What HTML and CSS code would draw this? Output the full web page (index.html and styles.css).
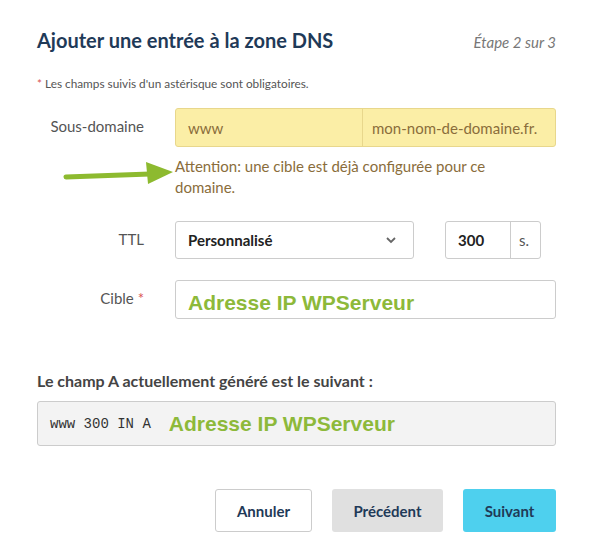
FILE: index.html
```html
<!DOCTYPE html>
<html lang="fr">
<head>
    <meta charset="UTF-8">
    <title>Ajouter une entrée à la zone DNS</title>
    <link rel="stylesheet" href="styles.css">
</head>
<body>
    <div class="dialog">
        <div class="head">
            <h1>Ajouter une entrée à la zone DNS</h1>
            <span class="step">Étape 2 sur 3</span>
        </div>
        <p class="required"><span class="star">*</span> Les champs suivis d'un astérisque sont obligatoires.</p>

        <div class="form">
            <label class="label">Sous-domaine</label>
            <div class="group warn">
                <span class="cell sub">www</span>
                <span class="cell zone">mon-nom-de-domaine.fr.</span>
            </div>

            <div class="arrow-cell">
                <svg class="arrow" width="120" height="26" viewBox="0 0 120 26">
                    <line x1="4" y1="17" x2="88" y2="14" stroke="#8dba2f" stroke-width="5" stroke-linecap="round"/>
                    <polygon points="84,2 111,12 86,24" fill="#8dba2f"/>
                </svg>
            </div>
            <p class="warning">Attention: une cible est déjà configurée pour ce domaine.</p>

            <label class="label ttl-label">TTL</label>
            <div class="ttl">
                <div class="select">
                    <span>Personnalisé</span>
                    <svg width="12" height="8" viewBox="0 0 12 8"><path d="M2 2 L6 6 L10 2" fill="none" stroke="#666" stroke-width="1.8"/></svg>
                </div>
                <div class="group number">
                    <span class="cell num">300</span>
                    <span class="cell unit">s.</span>
                </div>
            </div>

            <label class="label cible-label">Cible <span class="star">*</span></label>
            <div class="input"><span class="ip">Adresse IP WPServeur</span></div>
        </div>

        <h2 class="generated">Le champ A actuellement généré est le suivant :</h2>
        <div class="record">
            <code>www 300 IN A</code>
            <span class="ip">Adresse IP WPServeur</span>
        </div>

        <div class="actions">
            <button class="btn cancel">Annuler</button>
            <button class="btn prev">Précédent</button>
            <button class="btn next">Suivant</button>
        </div>
    </div>
</body>
</html>
```

FILE: styles.css
```css
body {
    margin: 0;
    font-family: Lato, "Open Sans", sans-serif;
    background: #fff;
    color: #555;
}
.dialog {
    padding: 27px 33px 0 37px;
}
.head {
    display: flex;
    justify-content: space-between;
    align-items: baseline;
}
h1 {
    margin: 0;
    font-size: 20px;
    line-height: 26px;
    font-weight: 700;
    color: #1f3a58;
}
.step {
    font-size: 15px;
    font-style: italic;
    color: #777;
}
.required {
    margin: 23px 0 0;
    font-size: 11.8px;
    line-height: 16px;
    color: #555;
}
.star {
    color: #d9534f;
}
.form {
    margin-top: 16px;
    display: grid;
    grid-template-columns: 107px 1fr;
    column-gap: 31px;
}
.label {
    text-align: right;
    font-size: 15px;
    line-height: 20px;
    padding-top: 8px;
    color: #555;
}
.group {
    display: flex;
    border: 1px solid #ccc;
    border-radius: 3px;
    height: 37px;
    font-size: 15px;
}
.cell {
    display: flex;
    align-items: center;
    padding: 0 12px;
}
.warn {
    background: #fbeea6;
    border-color: #e8d78c;
    color: #8a6d3b;
}
.sub {
    width: 162px;
    border-right: 1px solid #e8d78c;
}
.zone {
    padding-left: 9px;
}
.arrow-cell {
    position: relative;
}
.arrow {
    position: absolute;
    left: 25px;
    top: 13px;
}
.warning {
    margin: 9px 0 0;
    font-size: 15px;
    line-height: 21px;
    color: #8a6d3b;
    padding-right: 50px;
}
.ttl-label {
    margin-top: 23px;
}
.ttl {
    margin-top: 23px;
    display: flex;
    gap: 31px;
}
.select {
    width: 209px;
    height: 36px;
    border: 1px solid #ccc;
    border-radius: 3px;
    display: flex;
    align-items: center;
    justify-content: space-between;
    padding: 0 16px 0 12px;
    font-size: 15px;
    font-weight: 700;
    color: #222;
}
.number {
    width: 94px;
    height: 36px;
}
.num {
    width: 40px;
    font-weight: 700;
    color: #222;
    border-right: 1px solid #ccc;
}
.unit {
    padding: 0 8px;
    color: #555;
}
.cible-label {
    margin-top: 21px;
}
.input {
    margin-top: 21px;
    border: 1px solid #ccc;
    border-radius: 3px;
    display: flex;
    align-items: flex-end;
    padding: 0 12px 3px;
    box-sizing: border-box;
    height: 39px;
}
.ip {
    font-family: "Liberation Sans", Arial, sans-serif;
    font-weight: bold;
    font-size: 21px;
    color: #8db93a;
}
.generated {
    margin: 52px 0 0;
    font-size: 16px;
    line-height: 20px;
    font-weight: 700;
    color: #444;
}
.record {
    margin-top: 10px;
    height: 45px;
    box-sizing: border-box;
    border: 1px solid #ccc;
    border-radius: 3px;
    background: #f3f3f3;
    display: flex;
    align-items: center;
    padding: 0 12px;
    gap: 18px;
}
code {
    font-family: "Liberation Mono", "DejaVu Sans Mono", monospace;
    font-size: 14px;
    color: #333;
}
.actions {
    margin-top: 43px;
    display: flex;
    justify-content: flex-end;
    gap: 20px;
}
.btn {
    height: 43px;
    border: 1px solid transparent;
    border-radius: 3px;
    font-family: Lato, "Open Sans", sans-serif;
    font-size: 15px;
    font-weight: 700;
    color: #1f3a58;
    padding: 0;
}
.cancel {
    width: 97px;
    background: #fff;
    border-color: #ccc;
}
.prev {
    width: 111px;
    background: #e0e0e0;
}
.next {
    width: 93px;
    background: #4ed0ee;
}
```
